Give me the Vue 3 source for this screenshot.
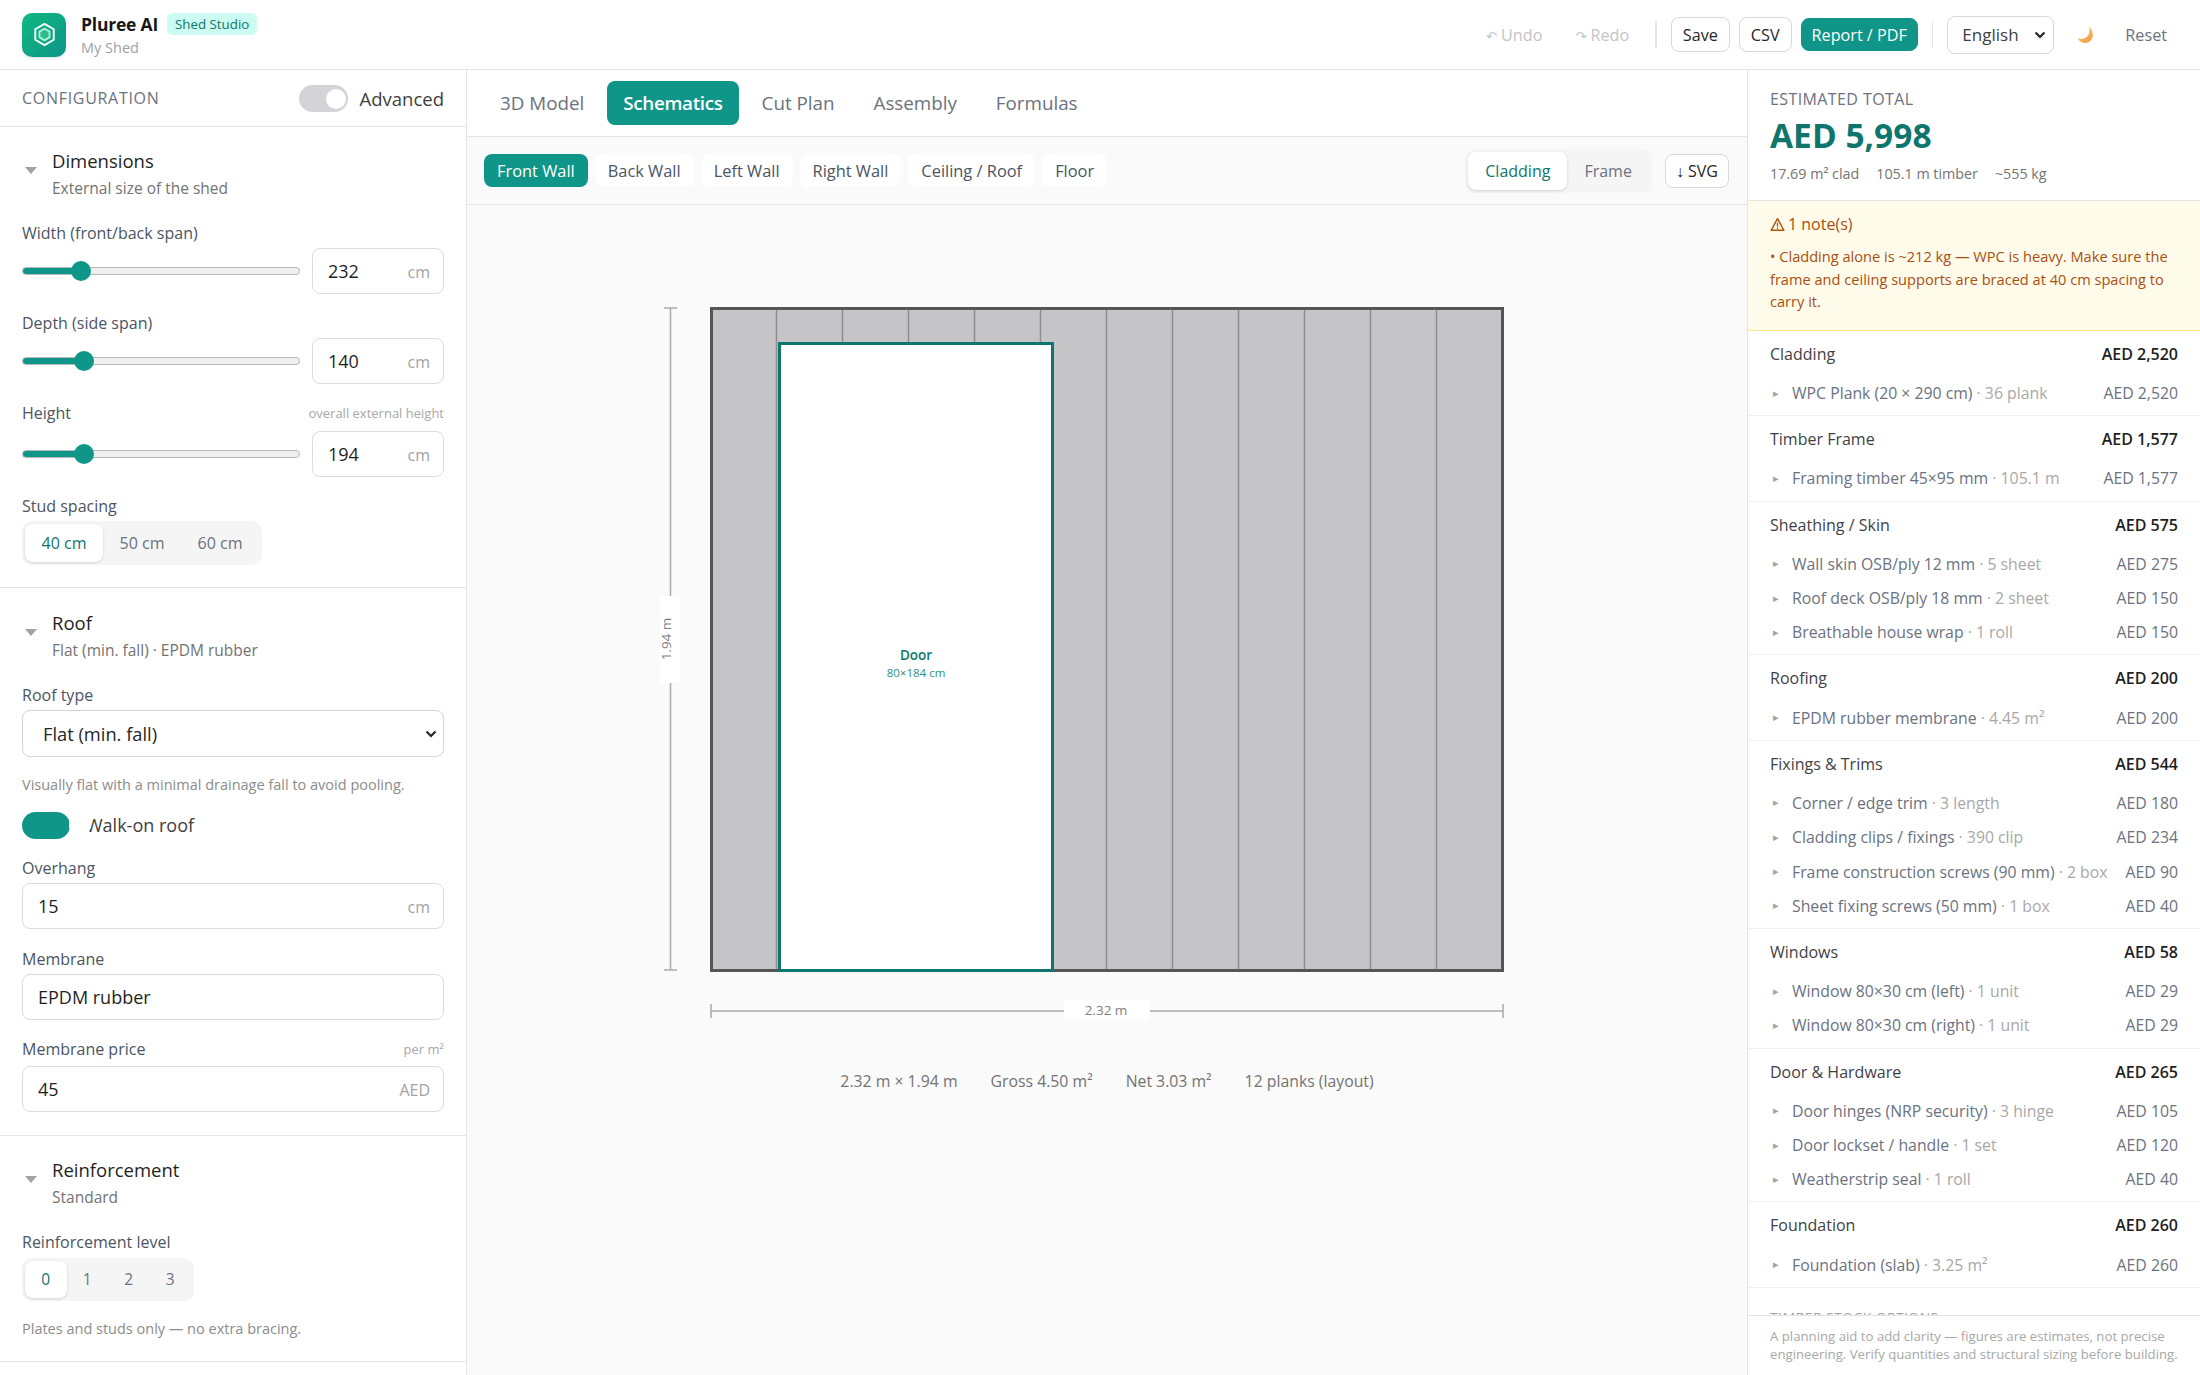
<template>
  <div class="app">
    <header class="topbar">
      <div class="logo">
        <svg viewBox="0 0 24 24" width="27" height="27" fill="none">
          <path d="M12 2.600l8.200 4.700v9.400L12 21.400l-8.200-4.700V7.300z" stroke="#fff" stroke-width="1.700" stroke-linejoin="round" />
          <path d="M12 6.800l4.500 2.600v5.200L12 17.200l-4.500-2.600V9.400z" stroke="#a7f3d0" stroke-width="1.700" fill="#34b892" stroke-linejoin="round" />
        </svg>
      </div>
      <div class="brand">
        <div class="brand-top">
          <span class="brand-name">Pluree AI</span>
          <span class="brand-badge">Shed Studio</span>
        </div>
        <div class="brand-sub">My Shed</div>
      </div>
      <div class="top-actions">
        <span class="ghost off undo"><i>↶</i> Undo</span>
        <span class="ghost off redo"><i>↷</i> Redo</span>
        <span class="vline first"></span>
        <button class="btn save">Save</button>
        <button class="btn csv">CSV</button>
        <button class="btn primary">Report / PDF</button>
        <span class="vline second"></span>
        <select class="lang"><option>English</option></select>
        <svg class="moon" viewBox="0 0 20 20" width="20" height="20">
          <defs>
            <linearGradient id="moonfill" x1="0" y1="0" x2="0.6" y2="1">
              <stop offset="0" stop-color="#fcd58a" />
              <stop offset="1" stop-color="#f2a04a" />
            </linearGradient>
          </defs>
          <path d="M13.500 1.500c1.800 3.700 1 8.600-2.600 11-2.400 1.600-5.500 1.800-8.400.7 1.700 2.800 4.400 4.800 7.700 4.800 4.500 0 7.600-3.700 7.600-8 0-3.600-1.700-7-4.300-8.500z" fill="url(#moonfill)" />
        </svg>
        <span class="ghost reset">Reset</span>
      </div>
    </header>

    <div class="body">
      <aside class="left">
        <div class="config-head">
          <span class="config-title">CONFIGURATION</span>
          <span class="switch"><span class="knob"></span></span>
          <span class="config-adv">Advanced</span>
        </div>

        <section class="sect">
          <div class="sect-head">
            <span class="caret"></span>
            <div>
              <div class="sect-title">Dimensions</div>
              <div class="sect-sub">External size of the shed</div>
            </div>
          </div>
          <div v-for="f in sliders" :key="f.label" class="field" :class="f.cls">
            <div class="lab"><span>{{ f.label }}</span><span v-if="f.hint" class="lab-hint">{{ f.hint }}</span></div>
            <div class="slider-row">
              <input
                class="range"
                type="range"
                :min="f.min"
                :max="f.max"
                :value="f.value"
                :style="{ '--fill': fillFor(f) }"
              />
              <div class="num small">
                <input :value="f.value" />
                <span class="unit">cm</span>
              </div>
            </div>
          </div>
          <div class="field last">
            <div class="lab">Stud spacing</div>
            <div class="seg stud">
              <span v-for="(s, i) in spacing" :key="s" class="seg-item" :class="{ on: i === 0 }">{{ s }}</span>
            </div>
          </div>
        </section>

        <section class="sect roof">
          <div class="sect-head">
            <span class="caret"></span>
            <div>
              <div class="sect-title">Roof</div>
              <div class="sect-sub">Flat (min. fall) · EPDM rubber</div>
            </div>
          </div>
          <div class="lab">Roof type</div>
          <select class="wide-select"><option>Flat (min. fall)</option></select>
          <div class="hint roof-hint">Visually flat with a minimal drainage fall to avoid pooling.</div>
          <div class="walk">
            <span class="walk-switch"></span>
            <span class="walk-label">Walk-on roof</span>
            <span class="walk-knob"></span>
          </div>
          <div class="lab overhang">Overhang</div>
          <div class="num full">
            <input value="15" />
            <span class="unit">cm</span>
          </div>
          <div class="lab stacked">Membrane</div>
          <div class="num full">
            <input value="EPDM rubber" />
          </div>
          <div class="lab stacked price"><span>Membrane price</span><span class="lab-hint">per m²</span></div>
          <div class="num full">
            <input value="45" />
            <span class="unit">AED</span>
          </div>
        </section>

        <section class="sect reinf">
          <div class="sect-head">
            <span class="caret"></span>
            <div>
              <div class="sect-title">Reinforcement</div>
              <div class="sect-sub">Standard</div>
            </div>
          </div>
          <div class="lab level-lab">Reinforcement level</div>
          <div class="seg level">
            <span v-for="(s, i) in levels" :key="s" class="seg-item" :class="{ on: i === 0 }">{{ s }}</span>
          </div>
          <div class="hint level-hint">Plates and studs only — no extra bracing.</div>
        </section>
      </aside>

      <main class="center">
        <nav class="tabs">
          <span v-for="t in tabs" :key="t" class="tab" :class="{ on: t === 'Schematics' }">{{ t }}</span>
        </nav>
        <div class="subbar">
          <span v-for="w in walls" :key="w" class="wall" :class="{ on: w === 'Front Wall' }">{{ w }}</span>
          <div class="seg view">
            <span class="seg-item on">Cladding</span>
            <span class="seg-item">Frame</span>
          </div>
          <button class="btn svg-btn"><b>↓</b> SVG</button>
        </div>
        <div class="canvas">
          <svg class="draw" viewBox="657 300 900 720" width="900" height="720">
            <rect x="711.500" y="308.500" width="791" height="662" fill="#c5c5c7" />
            <line v-for="x in plankLines" :key="x" :x1="x" :x2="x" y1="308" y2="970" stroke="#8e8e90" stroke-width="1.500" />
            <rect x="711.500" y="308.500" width="791" height="662" fill="none" stroke="#555" stroke-width="3" />
            <rect x="779.500" y="343.500" width="273" height="627" fill="#fff" stroke="#0f766e" stroke-width="3" />
            <text x="916" y="660" class="door-name" text-anchor="middle">Door</text>
            <text x="916" y="677" class="door-size" text-anchor="middle">80×184 cm</text>

            <g stroke="#aaa" stroke-width="1.500">
              <line x1="670.500" x2="670.500" y1="308" y2="970" />
              <line x1="664" x2="677" y1="308" y2="308" />
              <line x1="664" x2="677" y1="970" y2="970" />
              <line x1="711" x2="1503" y1="1011" y2="1011" />
              <line x1="711" x2="711" y1="1004" y2="1018" />
              <line x1="1503" x2="1503" y1="1004" y2="1018" />
            </g>
            <rect x="660" y="596" width="20" height="87" fill="#fff" />
            <rect x="1064" y="1000" width="86" height="20" fill="#fff" />
            <text x="0" y="0" class="dim" text-anchor="middle" transform="translate(671 639) rotate(-90)">1.94 m</text>
            <text x="1106" y="1015" class="dim" text-anchor="middle">2.32 m</text>
          </svg>
          <div class="stats">
            <span>2.32 m × 1.94 m</span>
            <span>Gross 4.50 m²</span>
            <span>Net 3.03 m²</span>
            <span>12 planks (layout)</span>
          </div>
        </div>
      </main>

      <aside class="right">
        <div class="total">
          <div class="total-label">ESTIMATED TOTAL</div>
          <div class="total-value">AED 5,998</div>
          <div class="total-meta">
            <span>17.69 m² clad</span>
            <span>105.1 m timber</span>
            <span>~555 kg</span>
          </div>
        </div>
        <div class="notes">
          <div class="notes-title">
            <svg viewBox="0 0 16 16" width="15" height="15" fill="none" stroke="#b45309">
              <path d="M8 1.800L14.800 14.200H1.200z" stroke-width="1.500" stroke-linejoin="round" />
              <path d="M8 6v4.500M8 11.500v1.200" stroke-width="1.400" />
            </svg>
            <span>1 note(s)</span>
          </div>
          <div class="notes-body">• Cladding alone is ~212 kg — WPC is heavy. Make sure the frame and ceiling supports are braced at 40 cm spacing to carry it.</div>
        </div>
        <div class="cost-list">
          <div v-for="g in costs" :key="g.name" class="cost-group">
            <div class="cost-head">
              <span>{{ g.name }}</span>
              <span class="cost-sum">{{ g.total }}</span>
            </div>
            <div v-for="item in g.items" :key="item[0]" class="cost-item">
              <span class="tri">▸</span>
              <span class="cost-name">{{ item[0] }}<span class="cost-qty"> · {{ item[1] }}</span></span>
              <span class="cost-price">{{ item[2] }}</span>
            </div>
          </div>
          <div class="stock-title">TIMBER STOCK OPTIONS</div>
        </div>
        <div class="foot">A planning aid to add clarity — figures are estimates, not precise engineering. Verify quantities and structural sizing before building.</div>
      </aside>
    </div>
  </div>
</template>

<script setup>
const sliders = [
  { label: 'Width (front/back span)', value: 232, min: 100, max: 800 },
  { label: 'Depth (side span)', value: 140, min: 100, max: 300 },
  { label: 'Height', hint: 'overall external height', value: 194, min: 150, max: 370, cls: 'tall' },
];
const spacing = ['40 cm', '50 cm', '60 cm'];
const levels = ['0', '1', '2', '3'];
const tabs = ['3D Model', 'Schematics', 'Cut Plan', 'Assembly', 'Formulas'];
const walls = ['Front Wall', 'Back Wall', 'Left Wall', 'Right Wall', 'Ceiling / Roof', 'Floor'];
const plankLines = Array.from({ length: 11 }, (_, i) => 776.5 + i * 66);

const costs = [
  { name: 'Cladding', total: 'AED 2,520', items: [['WPC Plank (20 × 290 cm)', '36 plank', 'AED 2,520']] },
  { name: 'Timber Frame', total: 'AED 1,577', items: [['Framing timber 45×95 mm', '105.1 m', 'AED 1,577']] },
  {
    name: 'Sheathing / Skin',
    total: 'AED 575',
    items: [
      ['Wall skin OSB/ply 12 mm', '5 sheet', 'AED 275'],
      ['Roof deck OSB/ply 18 mm', '2 sheet', 'AED 150'],
      ['Breathable house wrap', '1 roll', 'AED 150'],
    ],
  },
  { name: 'Roofing', total: 'AED 200', items: [['EPDM rubber membrane', '4.45 m²', 'AED 200']] },
  {
    name: 'Fixings & Trims',
    total: 'AED 544',
    items: [
      ['Corner / edge trim', '3 length', 'AED 180'],
      ['Cladding clips / fixings', '390 clip', 'AED 234'],
      ['Frame construction screws (90 mm)', '2 box', 'AED 90'],
      ['Sheet fixing screws (50 mm)', '1 box', 'AED 40'],
    ],
  },
  {
    name: 'Windows',
    total: 'AED 58',
    items: [
      ['Window 80×30 cm (left)', '1 unit', 'AED 29'],
      ['Window 80×30 cm (right)', '1 unit', 'AED 29'],
    ],
  },
  {
    name: 'Door & Hardware',
    total: 'AED 265',
    items: [
      ['Door hinges (NRP security)', '3 hinge', 'AED 105'],
      ['Door lockset / handle', '1 set', 'AED 120'],
      ['Weatherstrip seal', '1 roll', 'AED 40'],
    ],
  },
  { name: 'Foundation', total: 'AED 260', items: [['Foundation (slab)', '3.25 m²', 'AED 260']] },
];

function fillFor(f) {
  const frac = (f.value - f.min) / (f.max - f.min);
  return `calc(10px + ${frac} * (100% - 20px))`;
}
</script>

<style scoped>
.app {
  height: 100vh;
  display: flex;
  flex-direction: column;
  font-family: "Open Sans", "Noto Sans", sans-serif;
  color: #1f2937;
  background: #fff;
  overflow: hidden;
}
button,
select,
input {
  font-family: inherit;
}

.topbar {
  height: 69px;
  flex: none;
  display: flex;
  align-items: center;
  padding-left: 22px;
  border-bottom: 1.500px solid #e5e5e5;
  box-sizing: content-box;
}
.logo {
  width: 44px;
  height: 44px;
  border-radius: 10px;
  background: linear-gradient(135deg, #10b981, #0d9488);
  box-shadow: 0 1px 3px rgba(0, 0, 0, 0.15);
  display: flex;
  align-items: center;
  justify-content: center;
}
.brand {
  margin-left: 15px;
}
.brand-top {
  display: flex;
  align-items: center;
  gap: 9px;
}
.brand-name {
  font-size: 17.500px;
  font-weight: 700;
  color: #171717;
  letter-spacing: -0.2px;
}
.brand-badge {
  font-size: 13.300px;
  font-weight: 500;
  line-height: 22px;
  padding: 0 8px;
  border-radius: 6px;
  background: #ccfbf1;
  color: #0f766e;
}
.brand-sub {
  font-size: 14.500px;
  color: #a1a1aa;
  line-height: 20px;
  margin-top: 2px;
}
.top-actions {
  margin-left: auto;
  display: flex;
  align-items: center;
  padding-right: 33px;
}
.ghost {
  font-size: 16.200px;
  color: #6b7280;
}
.ghost.off {
  color: #c4c4c8;
}
.ghost i {
  font-style: normal;
  font-size: 13px;
  font-family: "DejaVu Sans", sans-serif;
}
.redo {
  margin-left: 33px;
}
.vline {
  width: 1.500px;
  height: 27px;
  background: #e5e5e5;
}
.vline.first {
  margin: 0 14px 0 26px;
}
.vline.second {
  margin: 0 14px;
}
.btn {
  height: 35px;
  padding: 0 11px;
  border: 1.500px solid #d8d8dc;
  border-radius: 8px;
  background: #fff;
  color: #262626;
  font-size: 16.200px;
  font-weight: 500;
  margin-right: 9px;
  white-space: nowrap;
}
.btn.primary {
  background: #0f9688;
  border-color: #0f9688;
  color: #fff;
  margin-right: 0;
  height: 33px;
  padding: 0 10px;
}
.lang {
  appearance: none;
  width: 107px;
  height: 38px;
  border: 1.500px solid #d8d8dc;
  border-radius: 8px;
  background: #fff url('data:image/svg+xml;utf8,<svg xmlns="http://www.w3.org/2000/svg" viewBox="0 0 12 8"><path d="M1.500 1.500L6 6l4.500-4.500" fill="none" stroke="%23262626" stroke-width="2.200"/></svg>') no-repeat right 7px center / 12px 8px;
  color: #404040;
  font-size: 17px;
  padding-left: 14px;
}
.moon {
  margin: 0 30px 0 21px;
}

.body {
  flex: 1;
  min-height: 0;
  display: flex;
}

.left {
  width: 467px;
  flex: none;
  box-sizing: border-box;
  border-right: 1.500px solid #e5e5e5;
  overflow: hidden;
}
.config-head {
  height: 56px;
  box-sizing: content-box;
  display: flex;
  align-items: center;
  padding: 0 22px;
  border-bottom: 1.500px solid #e5e5e5;
}
.config-title {
  font-size: 16px;
  font-weight: 500;
  color: #6b7280;
  letter-spacing: 0.7px;
}
.switch {
  margin-left: auto;
  width: 49px;
  height: 27px;
  border-radius: 14px;
  background: #d4d4d8;
  position: relative;
}
.knob {
  position: absolute;
  right: 2px;
  top: 4px;
  width: 20px;
  height: 20px;
  border-radius: 50%;
  background: #fff;
}
.config-adv {
  margin-left: 12px;
  font-size: 18.500px;
  color: #404040;
}

.sect {
  padding: 21px 22px 22px;
  border-bottom: 1.500px solid #e5e5e5;
}
.sect.roof {
  padding: 22px 22px 23px;
}
.sect-head {
  display: flex;
  align-items: flex-start;
  margin-bottom: 23px;
}
.caret {
  width: 0;
  height: 0;
  border-left: 6.500px solid transparent;
  border-right: 6.500px solid transparent;
  border-top: 7px solid #a3a3a3;
  margin: 19px 15px 0 3px;
}
.sect-title {
  font-size: 18.500px;
  font-weight: 500;
  line-height: 26px;
  color: #1f1f1f;
}
.sect-sub {
  font-size: 15.500px;
  line-height: 22px;
  margin-top: 3px;
  color: #737373;
}

.field {
  margin-bottom: 18px;
}
.field.last {
  margin-bottom: 0;
}
.field.tall .lab {
  margin-bottom: 7px;
}
.lab {
  display: flex;
  justify-content: space-between;
  align-items: center;
  font-size: 16px;
  font-weight: 500;
  line-height: 22px;
  color: #4b5563;
  margin-bottom: 4px;
}
.lab-hint {
  font-size: 13px;
  font-weight: 400;
  color: #a8a8a8;
}
.lab.overhang {
  margin-top: 18px;
}
.lab.stacked {
  margin-top: 19px;
}
.lab.price {
  margin-top: 17.500px;
  margin-bottom: 6px;
}
.lab.level-lab {
  margin-bottom: 5px;
}
.slider-row {
  display: flex;
  align-items: center;
  gap: 12px;
}
.range {
  -webkit-appearance: none;
  appearance: none;
  flex: 1;
  min-width: 0;
  margin: 0;
  height: 20px;
  background: transparent;
}
.range::-webkit-slider-runnable-track {
  height: 8px;
  border-radius: 4px;
  box-sizing: border-box;
  background: linear-gradient(to right, #0f9688 var(--fill), #efefef var(--fill));
  border: 1px solid #b8b8b8;
}
.range::-webkit-slider-thumb {
  -webkit-appearance: none;
  width: 20px;
  height: 20px;
  margin-top: -7px;
  border-radius: 50%;
  border: none;
  background: #0f9688;
}
.num {
  position: relative;
  height: 46px;
  box-sizing: border-box;
  border: 1.500px solid #dcdcdc;
  border-radius: 8px;
  background: #fff;
}
.num.small {
  width: 132px;
  flex: none;
}
.num input {
  width: 100%;
  height: 100%;
  box-sizing: border-box;
  border: none;
  outline: none;
  background: transparent;
  padding: 0 15px;
  font-size: 18px;
  color: #1f1f1f;
  border-radius: 8px;
}
.unit {
  position: absolute;
  right: 13px;
  top: 13px;
  font-size: 16px;
  line-height: 20px;
  color: #a3a3a3;
}
.seg {
  display: inline-flex;
  background: #f5f5f5;
  border-radius: 10px;
  padding: 3px;
  height: 44px;
  box-sizing: border-box;
}
.seg-item {
  display: flex;
  align-items: center;
  justify-content: center;
  font-size: 16px;
  font-weight: 500;
  color: #6b7280;
  border-radius: 8px;
}
.seg-item.on {
  background: #fff;
  color: #0f766e;
  box-shadow: 0 1px 3px rgba(0, 0, 0, 0.14);
}
.seg.stud .seg-item {
  width: 78px;
}
.seg.level {
  height: 43px;
}
.seg.level .seg-item {
  width: 41.500px;
  font-size: 15.500px;
}
.wide-select {
  appearance: none;
  display: block;
  width: 100%;
  height: 47px;
  border: 1.500px solid #d4d4d4;
  border-radius: 8px;
  background: #fff url('data:image/svg+xml;utf8,<svg xmlns="http://www.w3.org/2000/svg" viewBox="0 0 12 8"><path d="M1.500 1.500L6 6l4.500-4.500" fill="none" stroke="%23262626" stroke-width="2.200"/></svg>') no-repeat right 6px center / 12px 8px;
  font-size: 18.300px;
  color: #262626;
  padding-left: 20px;
}
.hint {
  font-size: 14.500px;
  line-height: 20px;
  color: #8c8c8c;
}
.roof-hint {
  margin-top: 18px;
}
.walk {
  position: relative;
  height: 28px;
  margin-top: 16px;
  display: flex;
  align-items: center;
}
.walk-switch {
  width: 48px;
  height: 27px;
  border-radius: 14px;
  background: #0f9688;
}
.walk-knob {
  position: absolute;
  left: 47px;
  top: 3px;
  width: 22px;
  height: 22px;
  border-radius: 50%;
  background: #fff;
}
.walk-label {
  margin-left: 16px;
  font-size: 18px;
  color: #404040;
}
.level-hint {
  margin-top: 18px;
}
.reinf {
  padding-bottom: 22px;
}

.center {
  flex: 1;
  min-width: 0;
  display: flex;
  flex-direction: column;
}
.tabs {
  height: 66px;
  flex: none;
  box-sizing: content-box;
  display: flex;
  align-items: center;
  padding-left: 17px;
  gap: 7px;
  border-bottom: 1.500px solid #e5e5e5;
}
.tab {
  height: 44px;
  display: flex;
  align-items: center;
  padding: 0 16px;
  border-radius: 8px;
  font-size: 18.800px;
  font-weight: 500;
  color: #6b7280;
  white-space: nowrap;
}
.tab.on {
  background: #0f9688;
  color: #fff;
  font-weight: 600;
  letter-spacing: -0.3px;
}
.subbar {
  height: 67px;
  flex: none;
  box-sizing: content-box;
  display: flex;
  align-items: center;
  padding: 0 18px 0 17px;
  gap: 7px;
  background: #fafafa;
  border-bottom: 1.500px solid #e5e5e5;
}
.wall {
  height: 33px;
  display: flex;
  align-items: center;
  padding: 0 13px;
  border-radius: 8px;
  background: #fff;
  font-size: 16.400px;
  font-weight: 500;
  color: #4b5563;
  white-space: nowrap;
}
.wall.on {
  background: #0f9688;
  color: #fff;
}
.seg.view {
  margin-left: auto;
  gap: 0;
}
.seg.view .seg-item {
  font-size: 16px;
  height: 38px;
  padding: 0 17px;
}
.svg-btn {
  margin: 0 0 0 6px;
  height: 34px;
  padding: 0 10px;
  font-size: 16px;
}
.svg-btn b {
  font-weight: 700;
}
.canvas {
  flex: 1;
  min-height: 0;
  background: #fafafa;
  padding-top: 95px;
  display: flex;
  flex-direction: column;
  align-items: center;
}
.draw {
  flex: none;
  display: block;
}
.door-name {
  font-size: 13.500px;
  font-weight: 600;
  fill: #0f766e;
}
.door-size {
  font-size: 11.500px;
  fill: #2f9082;
}
.dim {
  font-size: 13.500px;
  fill: #808080;
}
.stats {
  margin-top: 50px;
  display: flex;
  gap: 33px;
  font-size: 15.800px;
  line-height: 22px;
  color: #737373;
}

.right {
  width: 453px;
  flex: none;
  box-sizing: border-box;
  border-left: 1.500px solid #e5e5e5;
  display: flex;
  flex-direction: column;
  min-height: 0;
}
.total {
  height: 131px;
  flex: none;
  box-sizing: border-box;
  padding: 18px 22px 0;
  border-bottom: 1.500px solid #e5e5e5;
}
.total-label {
  font-size: 16px;
  font-weight: 500;
  line-height: 22px;
  color: #6b7280;
  letter-spacing: 0.4px;
}
.total-value {
  font-size: 33.500px;
  font-weight: 700;
  line-height: 46px;
  margin-top: 2px;
  color: #0f766e;
}
.total-meta {
  display: flex;
  gap: 17px;
  margin-top: 5px;
  font-size: 14.300px;
  line-height: 22px;
  color: #737373;
}
.notes {
  height: 130px;
  flex: none;
  box-sizing: border-box;
  padding: 12px 22px 0;
  background: #fffbeb;
  border-bottom: 1.500px solid #fde68a;
  color: #a8500f;
}
.notes-title {
  display: flex;
  align-items: center;
  gap: 3px;
  font-size: 16px;
  font-weight: 500;
  line-height: 22px;
}
.notes-body {
  margin-top: 10px;
  font-size: 14.600px;
  line-height: 22.500px;
}
.cost-list {
  flex: 1;
  min-height: 0;
  overflow: hidden;
}
.cost-group {
  padding: 12px 22px 5px;
  border-bottom: 1px solid #f1f1f1;
}
.cost-head {
  display: flex;
  justify-content: space-between;
  font-size: 16px;
  font-weight: 500;
  line-height: 22px;
  color: #3f3f46;
  margin-bottom: 11px;
}
.cost-sum {
  font-weight: 600;
  color: #1f1f1f;
}
.cost-item {
  height: 34.300px;
  display: flex;
  align-items: center;
  font-size: 15.800px;
  color: #6b7280;
}
.tri {
  width: 22px;
  flex: none;
  font-size: 11px;
  color: #a3a3a3;
  padding-left: 3px;
  box-sizing: border-box;
  font-family: "DejaVu Sans", sans-serif;
}
.cost-name {
  flex: 1;
  min-width: 0;
  white-space: nowrap;
}
.cost-qty {
  color: #a8a8a8;
}
.cost-price {
  margin-left: auto;
  white-space: nowrap;
}
.stock-title {
  padding: 20px 22px 0;
  font-size: 14px;
  font-weight: 500;
  color: #a3a3a3;
  letter-spacing: 0.4px;
}
.foot {
  height: 60px;
  flex: none;
  box-sizing: border-box;
  padding: 12px 22px 0;
  border-top: 1.500px solid #e5e5e5;
  font-size: 13.200px;
  line-height: 17.500px;
  color: #a8a8a8;
}
</style>

<style>
html,
body {
  margin: 0;
  overflow: hidden;
}
</style>
